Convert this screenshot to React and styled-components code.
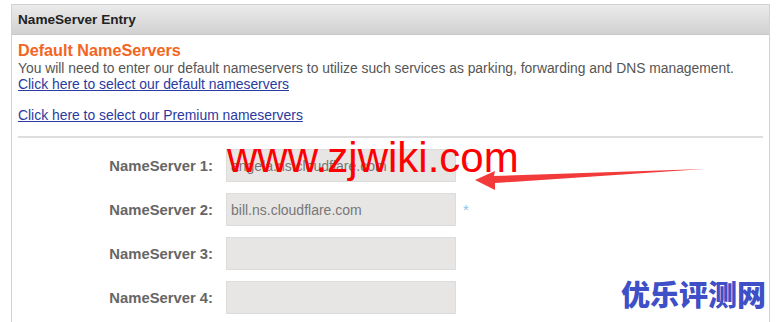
import React from "react"
import styled, { createGlobalStyle } from "styled-components"

const GlobalStyle = createGlobalStyle`
  html, body {
    margin: 0;
    padding: 0;
    background: #ffffff;
  }
  body {
    font-family: "Liberation Sans", Arial, sans-serif;
  }
`

const servers = [
  { label: "NameServer 1:", value: "angela.ns.cloudflare.com", required: true },
  { label: "NameServer 2:", value: "bill.ns.cloudflare.com", required: true },
  { label: "NameServer 3:", value: "" },
  { label: "NameServer 4:", value: "" },
]

const App = () => {
  return (
    <Page>
      <GlobalStyle />
      <Panel>
        <PanelHeader>NameServer Entry</PanelHeader>
        <PanelBody>
          <Title>Default NameServers</Title>
          <Description>
            You will need to enter our default nameservers to utilize such
            services as parking, forwarding and DNS management.
          </Description>
          <Link href="#">Click here to select our default nameservers</Link>
          <Spacer />
          <Link href="#">Click here to select our Premium nameservers</Link>
          <Divider />
          <Form>
            {servers.map((s) => (
              <Row key={s.label}>
                <Label>{s.label}</Label>
                <Field>{s.value}</Field>
                {s.required && <Star>*</Star>}
              </Row>
            ))}
          </Form>
        </PanelBody>
      </Panel>

      <Watermark>www.zjwiki.com</Watermark>
      <Arrow width="232" height="30" viewBox="0 0 232 30">
        <path d="M1 16 L21 7 L20 12 L230 5 L21 19 L21 26 Z" fill="#f23a3a" />
      </Arrow>
      <Brand>优乐评测网</Brand>
    </Page>
  )
}

const Page = styled.div`
  position: relative;
  width: 780px;
  height: 322px;
  overflow: hidden;
  padding: 4px 0 0 11px;
  box-sizing: border-box;
`

const Panel = styled.section`
  width: 759px;
  height: 330px;
  border: 1px solid #d2d2d2;
  box-sizing: border-box;
`

const PanelHeader = styled.div`
  height: 29px;
  padding-left: 6px;
  display: flex;
  align-items: center;
  font-size: 13.6px;
  font-weight: 700;
  color: #222;
  background: linear-gradient(#ebebeb, #d1d1d1);
  border-bottom: 1px solid #c8c8c8;
`

const PanelBody = styled.div`
  padding: 5px 6px 0 6px;
  display: flex;
  flex-direction: column;
  align-items: flex-start;
`

const Title = styled.h2`
  margin: 0;
  font-size: 16.2px;
  line-height: 20px;
  font-weight: 700;
  color: #f26522;
`

const Description = styled.p`
  margin: 0;
  font-size: 13.85px;
  line-height: 16px;
  color: #555;
`

const Link = styled.a`
  font-size: 13.9px;
  line-height: 16px;
  color: #2a3aa0;
  text-decoration: underline;
`

const Spacer = styled.div`
  height: 15px;
`

const Divider = styled.hr`
  align-self: stretch;
  margin: 13px 0 0 0;
  border: none;
  border-top: 2px solid #dedede;
`

const Form = styled.div`
  display: flex;
  flex-direction: column;
  gap: 11px;
  padding-top: 11px;
`

const Row = styled.div`
  display: flex;
  align-items: center;
`

const Label = styled.div`
  width: 195px;
  text-align: right;
  font-size: 14.8px;
  font-weight: 700;
  color: #666;
`

const Field = styled.div`
  margin-left: 13px;
  width: 230px;
  height: 33px;
  box-sizing: border-box;
  padding-left: 4px;
  display: flex;
  align-items: center;
  font-size: 14px;
  color: #777;
  background: #e7e6e5;
  border: 1px solid #dcdcdc;
`

const Star = styled.span`
  margin-left: 7px;
  font-size: 15px;
  color: #8cc4ea;
`

const Watermark = styled.div`
  position: absolute;
  left: 227px;
  top: 134px;
  font-family: "Liberation Sans", Arial, sans-serif;
  font-size: 42px;
  line-height: 48px;
  color: #ff0000;
`

const Arrow = styled.svg`
  position: absolute;
  left: 474px;
  top: 164px;
`

const Brand = styled.div`
  position: absolute;
  left: 621px;
  top: 275px;
  font-family: "Noto Sans CJK SC", sans-serif;
  font-size: 29px;
  line-height: 36px;
  font-weight: 900;
  color: #3e4fc7;
`

export default App
